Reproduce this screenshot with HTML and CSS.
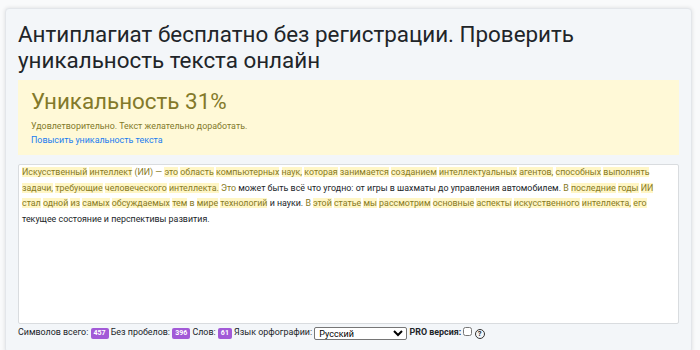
FILE: index.html
```html
<!DOCTYPE html>
<html lang="ru">

<head>
    <meta charset="UTF-8">
    <meta name="viewport" content="width=device-width, initial-scale=1.0">
    <title>Антиплагиат бесплатно</title>
    <link rel="stylesheet" href="styles.css">
</head>

<body>

    <div class="card">
        <h1 class="title">Антиплагиат бесплатно без регистрации. Проверить уникальность текста онлайн</h1>

        <div class="result">
            <div class="result-head">Уникальность 31%</div>
            <p class="result-note">Удовлетворительно. Текст желательно доработать.</p>
            <a class="result-link" href="#">Повысить уникальность текста</a>
        </div>

        <div class="editor">
            <span class="m"><i>Искусственный</i> <i>интеллект</i> (ИИ) — <i>это</i> <i>область</i> <i>компьютерных</i> <i>наук,</i> <i>которая</i> <i>занимается</i> <i>созданием</i> <i>интеллектуальных</i> <i>агентов,</i> <i>способных</i> <i>выполнять</i> <i>задачи,</i> <i>требующие</i> <i>человеческого</i> <i>интеллекта.</i> Это</span>
            может быть всё что угодно: от игры в шахматы до управления автомобилем.
            <span class="m">В <i>последние</i> <i>годы</i> <i>ИИ</i> <i>стал</i> <i>одной</i> <i>из</i> <i>самых</i> <i>обсуждаемых</i> <i>тем</i> в <i>мире</i> <i>технологий</i></span>
            и науки.
            <span class="m">В <i>этой</i> <i>статье</i> <i>мы</i> <i>рассмотрим</i> <i>основные</i> <i>аспекты</i> <i>искусственного</i> <i>интеллекта,</i> <i>его</i></span>
            текущее состояние и перспективы развития.
        </div>

        <div class="stats">
            Символов всего: <span class="badge">457</span>
            Без пробелов: <span class="badge">396</span>
            Слов: <span class="badge">61</span>
            Язык орфографии:
            <select class="lang">
                <option>Русский</option>
            </select>
            <b>PRO версия:</b>
            <input type="checkbox" class="pro">
            <span class="help">?</span>
        </div>
    </div>

</body>

</html>
```

FILE: styles.css
```css
* {
    margin: 0px;
    padding: 0px;
    box-sizing: border-box;
}

html,
body {
    overflow: hidden;
}

body {
    background-color: #f9fafb;
    font-family: Roboto, "Liberation Sans", sans-serif;
    color: #212529;
    padding: 8px 8px 0 5px;
    height: 350px;
}

.card {
    background-color: #f3f6f9;
    border: 1px solid #e3e6ea;
    border-radius: 4px;
    box-shadow: 0 0 4px rgba(0, 0, 0, 0.12);
    padding: 11px 12px 0 12px;
    height: 345px;
}

.title {
    font-size: 22.4px;
    font-weight: 400;
    line-height: 26px;
    color: #212529;
    padding-top: 1px;
    padding-right: 60px;
}

.result {
    margin-top: 7px;
    background-color: #fff9d7;
    padding: 8px 13px 8px 13px;
}

.result-head {
    font-size: 22.4px;
    line-height: 26px;
    color: #83792a;
}

.result-note {
    font-size: 8.9px;
    line-height: 14px;
    margin-top: 5px;
    color: #83792a;
}

.result-link {
    display: block;
    font-size: 8.9px;
    line-height: 14px;
    color: #1a7cf0;
    text-decoration: none;
}

.editor {
    margin-top: 9px;
    height: 160px;
    background-color: #fff;
    border: 1px solid #d9dcdf;
    border-radius: 2px;
    padding: 0 10px 0 3px;
    font-size: 8.85px;
    line-height: 15.5px;
    color: #212529;
}

.editor .m {
    color: #877a24;
}

.editor .m i {
    font-style: normal;
    background-color: #fff6c6;
}

.stats {
    margin-top: 1px;
    font-size: 8.9px;
    line-height: 14px;
    color: #212529;
}

.badge {
    display: inline-block;
    background-color: #a25ad7;
    color: #fff;
    font-size: 7px;
    font-weight: 700;
    line-height: 11px;
    padding: 0 3px;
    border-radius: 2px;
}

.lang {
    font-family: Roboto, "Liberation Sans", sans-serif;
    font-size: 9px;
    width: 93px;
    height: 13px;
    border: 1px solid #767676;
    border-radius: 2px;
    background-color: #fff;
    color: #000;
    vertical-align: -2px;
}

.pro {
    width: 9px;
    height: 9px;
    vertical-align: -1px;
}

.help {
    display: inline-block;
    width: 10px;
    height: 10px;
    border: 1px solid #333;
    border-radius: 50%;
    font-size: 7.5px;
    font-weight: 700;
    line-height: 8px;
    text-align: center;
    vertical-align: -1px;
}
```
